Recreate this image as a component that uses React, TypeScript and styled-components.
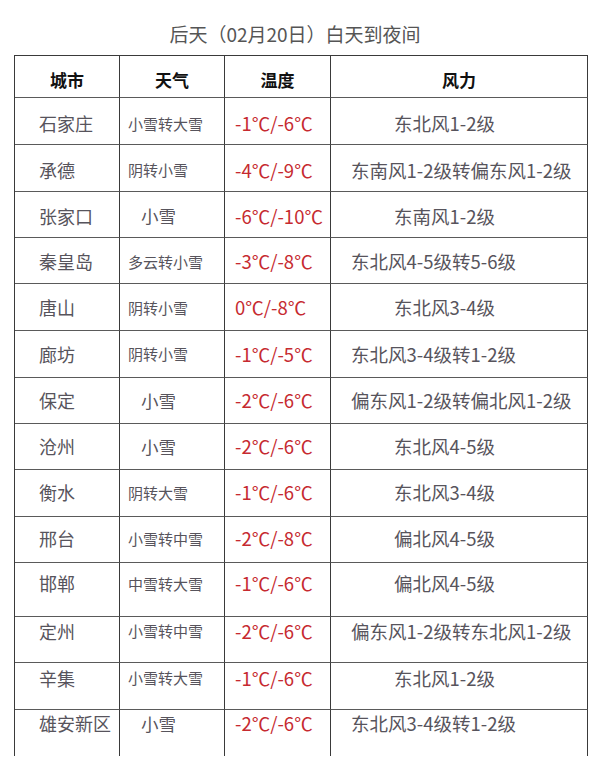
import React from "react";
import styled, { createGlobalStyle } from "styled-components";

const Global = createGlobalStyle`
  html, body { margin: 0; padding: 0; background: #ffffff; }
  body { font-family: "Noto Sans CJK SC", "Noto Sans", sans-serif; }
`;

const Page = styled.div`
  width: 600px;
  padding-top: 21px;
  box-sizing: border-box;
`;

const Title = styled.h1`
  margin: 0 0 9px 14px;
  width: 562px;
  font-size: 19px;
  line-height: 25px;
  font-weight: 400;
  color: #555;
  text-align: center;
`;

const Table = styled.div`
  margin-left: 14px;
  width: 574px;
  box-sizing: border-box;
  border-left: 1px solid #3a3a3a;
  border-top: 1px solid #3a3a3a;
`;

const Row = styled.div<{ $h: number; $dy: number }>`
  display: grid;
  grid-template-columns: 105px 105px 106px 257px;
  height: ${(p) => p.$h}px;
  & > div {
    padding-top: ${(p) => Math.max(0, p.$dy * 2)}px;
    padding-bottom: ${(p) => Math.max(0, -p.$dy * 2)}px;
  }
`;

const CellBase = styled.div`
  box-sizing: border-box;
  border-right: 1px solid #3a3a3a;
  border-bottom: 1px solid #5a5a5a;
  display: flex;
  align-items: center;
  white-space: nowrap;
  overflow: visible;
`;

const HeadCell = styled(CellBase)`
  justify-content: center;
  font-size: 17px;
  font-weight: 700;
  color: #111;
`;

const CityCell = styled(CellBase)`
  padding-left: 24px;
  font-size: 18px;
  color: #57545c;
`;

const WeatherCell = styled(CellBase)<{ $big: boolean }>`
  padding-left: ${(p) => (p.$big ? 21 : 8)}px;
  font-size: ${(p) => (p.$big ? 17.5 : 15)}px;
  color: #57545c;
`;

const TempCell = styled(CellBase)`
  padding-left: 10px;
  font-size: 18.5px;
  color: #c62a30;
`;

const WindCell = styled(CellBase)<{ $long: boolean }>`
  padding-left: ${(p) => (p.$long ? 20 : 63)}px;
  font-size: 18.5px;
  color: #57545c;
`;

type Item = {
  city: string;
  weather: string;
  temp: string;
  wind: string;
  h: number;
  dy: number;
};

const rows: Item[] = [
  { city: "石家庄", weather: "小雪转大雪", temp: "-1℃/-6℃", wind: "东北风1-2级", h: 47, dy: 2 },
  { city: "承德", weather: "阴转小雪", temp: "-4℃/-9℃", wind: "东南风1-2级转偏东风1-2级", h: 47, dy: 1.5 },
  { city: "张家口", weather: "小雪", temp: "-6℃/-10℃", wind: "东南风1-2级", h: 46, dy: 1 },
  { city: "秦皇岛", weather: "多云转小雪", temp: "-3℃/-8℃", wind: "东北风4-5级转5-6级", h: 46, dy: 0.5 },
  { city: "唐山", weather: "阴转小雪", temp: "0℃/-8℃", wind: "东北风3-4级", h: 47, dy: 0 },
  { city: "廊坊", weather: "阴转小雪", temp: "-1℃/-5℃", wind: "东北风3-4级转1-2级", h: 47, dy: -0.5 },
  { city: "保定", weather: "小雪", temp: "-2℃/-6℃", wind: "偏东风1-2级转偏北风1-2级", h: 46, dy: -0.5 },
  { city: "沧州", weather: "小雪", temp: "-2℃/-6℃", wind: "东北风4-5级", h: 46, dy: -0.5 },
  { city: "衡水", weather: "阴转大雪", temp: "-1℃/-6℃", wind: "东北风3-4级", h: 47, dy: -1 },
  { city: "邢台", weather: "小雪转中雪", temp: "-2℃/-8℃", wind: "偏北风4-5级", h: 46, dy: -1.5 },
  { city: "邯郸", weather: "中雪转大雪", temp: "-1℃/-6℃", wind: "偏北风4-5级", h: 54, dy: -6.5 },
  { city: "定州", weather: "小雪转中雪", temp: "-2℃/-6℃", wind: "偏东风1-2级转东北风1-2级", h: 46, dy: -9 },
  { city: "辛集", weather: "小雪转大雪", temp: "-1℃/-6℃", wind: "东北风1-2级", h: 47, dy: -8.5 },
  { city: "雄安新区", weather: "小雪", temp: "-2℃/-6℃", wind: "东北风3-4级转1-2级", h: 46, dy: -10 },
];

export default function App() {
  return (
    <Page>
      <Global />
      <Title>后天（02月20日）白天到夜间</Title>
      <Table>
        <Row $h={42} $dy={2.5}>
          <HeadCell>城市</HeadCell>
          <HeadCell>天气</HeadCell>
          <HeadCell>温度</HeadCell>
          <HeadCell>风力</HeadCell>
        </Row>
        {rows.map((r) => (
          <Row key={r.city} $h={r.h} $dy={r.dy}>
            <CityCell>{r.city}</CityCell>
            <WeatherCell $big={r.weather.length <= 2}>{r.weather}</WeatherCell>
            <TempCell>{r.temp}</TempCell>
            <WindCell $long={r.wind.includes("转")}>{r.wind}</WindCell>
          </Row>
        ))}
      </Table>
    </Page>
  );
}
